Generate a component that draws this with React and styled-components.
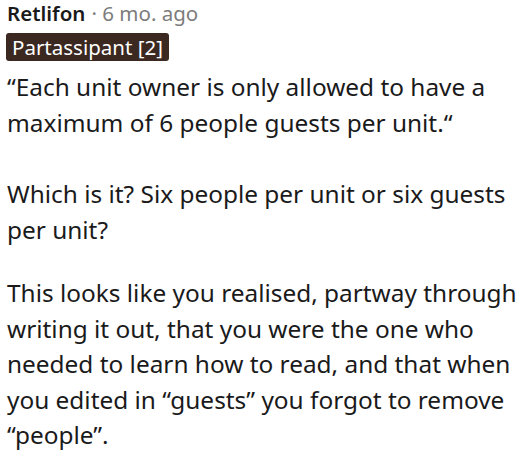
import styled, { createGlobalStyle } from 'styled-components';

const GlobalStyle = createGlobalStyle`
  body {
    margin: 0;
    background: #fff;
    font-family: 'Noto Sans', 'Open Sans', sans-serif;
  }
`;

const Comment = styled.div`
  padding: 0 7px;
  color: #1a1a1b;
`;

const Meta = styled.div`
  display: flex;
  align-items: baseline;
  gap: 6px;
  font-size: 20.5px;
  line-height: 26px;
`;

const Author = styled.span`
  font-weight: 600;
  color: #1a1a1b;
`;

const Age = styled.span`
  color: #7c7c7c;
`;

const Flair = styled.span`
  display: inline-block;
  margin-top: 7px;
  margin-left: -1px;
  padding: 0 6px;
  height: 28px;
  line-height: 28px;
  font-size: 20.5px;
  border-radius: 3px;
  background: #3b2820;
  color: #fff;
`;

const Body = styled.div`
  margin-top: 8px;
  font-size: 24.4px;
  line-height: 35.5px;
`;

const Para = styled.p`
  margin: 0 0 ${p => (p.$gap !== undefined ? p.$gap : 28)}px;
`;

const App = () => (
  <>
    <GlobalStyle />
    <Comment>
      <Meta>
        <Author>Retlifon</Author>
        <Age>· 6 mo. ago</Age>
      </Meta>
      <Flair>Partassipant [2]</Flair>
      <Body>
        <Para $gap={36}>
          “Each unit owner is only allowed to have a maximum of 6 people guests per unit.“
        </Para>
        <Para>Which is it? Six people per unit or six guests per unit?</Para>
        <Para $gap={0}>
          This looks like you realised, partway through writing it out, that you were the one
          who needed to learn how to read, and that when you edited in “guests” you forgot to
          remove “people”.
        </Para>
      </Body>
    </Comment>
  </>
);

export default App;
